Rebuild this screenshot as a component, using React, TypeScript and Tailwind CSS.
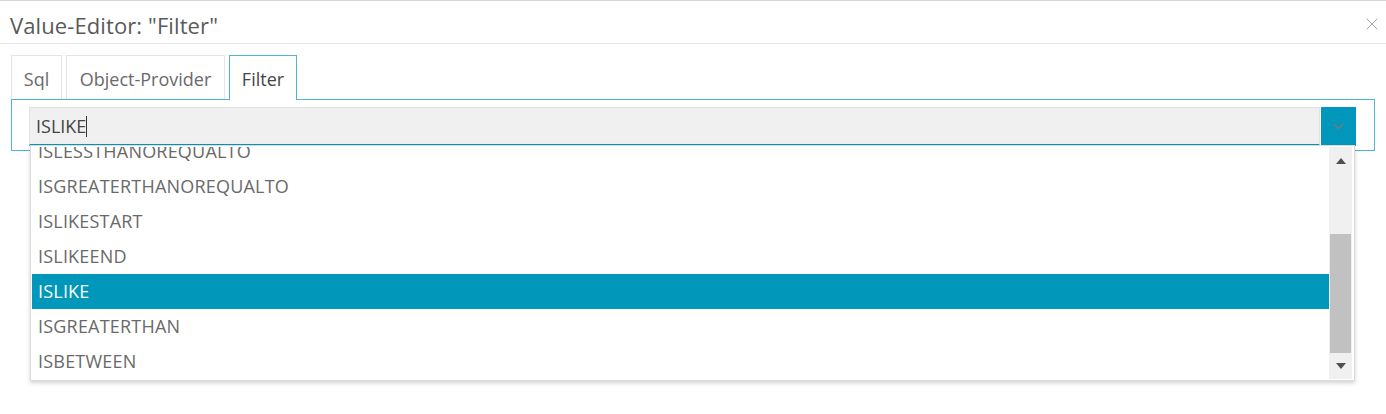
import { ChevronDown, X } from 'lucide-react';

const items = [
  'ISLESSTHANOREQUALTO',
  'ISGREATERTHANOREQUALTO',
  'ISLIKESTART',
  'ISLIKEEND',
  'ISLIKE',
  'ISGREATERTHAN',
  'ISBETWEEN',
];

export default function App() {
  return (
    <div className="w-[1386px] h-[414px] bg-white font-['Open_Sans',sans-serif] border-t border-[#d6d6d6] relative">
      {/* Header */}
      <div className="h-[43px] flex items-center justify-between border-b border-[#e8e8e8] pl-[10px] pr-[4px] pt-[5px]">
        <h1 className="text-[22px] tracking-[0.1px] text-[#5a5a5a] leading-none">Value-Editor: "Filter"</h1>
        <X size={20} strokeWidth={1.2} className="text-[#a8a8a8] -mt-[2px]" />
      </div>

      {/* Body */}
      <div className="pl-[11px] pr-[11px] pt-[11px]">
        <div className="flex items-end gap-[4px] h-[44px]">
          <div className="h-[44px] w-[51px] flex items-center justify-center pt-[3px] border border-b-0 border-[#e4e4e4] text-[18px] text-[#6a6a6a]">
            Sql
          </div>
          <div className="h-[44px] w-[159px] flex items-center justify-center pt-[3px] border border-b-0 border-[#e4e4e4] text-[18px] text-[#6a6a6a]">
            Object-Provider
          </div>
          <div className="h-[45px] w-[68px] flex items-center justify-center pt-[3px] border border-b-0 border-[#4cb6d2] bg-white text-[18px] text-[#444] relative z-10 -mb-px pb-px">
            Filter
          </div>
        </div>

        <div className="border border-[#4cb6d2] h-[52px] pl-[17px] pr-[18px] pt-[7px] relative">
          <div className="flex h-[39px]">
            <div className="flex-1 bg-[#f0f0f0] border border-[#e2e2e2] border-b-2 border-b-[#0097bb] flex items-center pl-[6px] text-[18px] text-[#444]">
              ISLIKE<span className="inline-block w-px h-[21px] bg-[#333]" />
            </div>
            <div className="w-[35px] ml-[1px] bg-[#0097bb] flex items-center justify-center">
              <ChevronDown size={17} strokeWidth={2.2} className="text-[#5f8088]" />
            </div>
          </div>

          {/* Dropdown */}
          <div className="absolute left-[18px] top-[45px] w-[1325px] h-[236px] bg-white border border-[#dcdcdc] shadow-[0_2px_4px_rgba(0,0,0,0.18)] z-20 flex pl-[1px] py-[1px] overflow-hidden">
            <div className="flex-1 overflow-hidden">
              <div className="-mt-[13px]">
                {items.map((item) => (
                  <div
                    key={item}
                    className={
                      item === 'ISLIKE'
                        ? 'h-[35px] flex items-center pl-[6px] text-[18px] tracking-[0.2px] bg-[#0097bb] text-white'
                        : 'h-[35px] flex items-center pl-[6px] text-[18px] tracking-[0.2px] text-[#696969]'
                    }
                  >
                    {item}
                  </div>
                ))}
              </div>
            </div>
            <div className="w-[23px] mr-[2px] bg-[#f0f0f0] flex flex-col">
              <div className="h-[30px] flex items-center justify-center">
                <svg width="10" height="6" viewBox="0 0 10 6">
                  <path d="M0 6 L5 0 L10 6 Z" fill="#505050" />
                </svg>
              </div>
              <div className="flex-1 flex flex-col px-[1px]">
                <div className="h-[58px]" />
                <div className="h-[119px] bg-[#c1c1c1]" />
              </div>
              <div className="h-[27px] flex items-center justify-center">
                <svg width="10" height="6" viewBox="0 0 10 6">
                  <path d="M0 0 L10 0 L5 6 Z" fill="#505050" />
                </svg>
              </div>
            </div>
          </div>
        </div>
      </div>
    </div>
  );
}
